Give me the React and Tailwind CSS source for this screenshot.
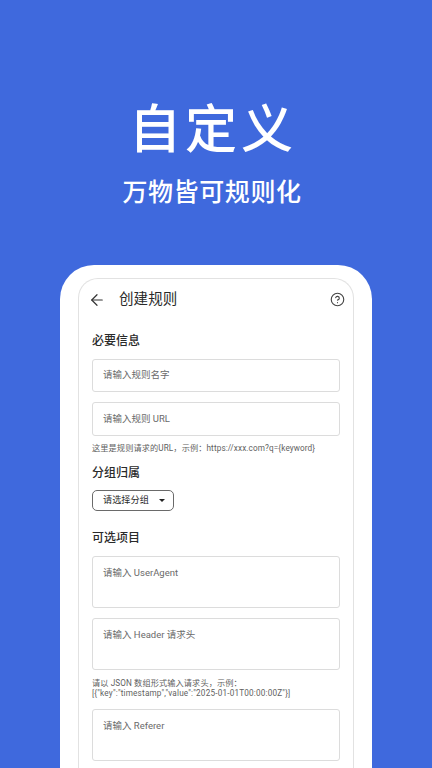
import { ArrowLeft, CircleHelp } from "lucide-react";

const FONT = "font-['Roboto','Noto_Sans_CJK_SC',sans-serif]";

const TextBox = ({ placeholder, className }) => (
  <div
    className={`rounded-[3px] border border-[#dcdcdc] bg-white pl-[10px] text-[9.5px] text-[#6a6a6a] ${className}`}
  >
    {placeholder}
  </div>
);

const SectionTitle = ({ children, className }) => (
  <h2 className={`text-[12px] leading-[18px] font-medium text-[#2a2a2a] ${className}`}>
    {children}
  </h2>
);

const Hint = ({ children, className }) => (
  <p className={`text-[8.2px] leading-[10.5px] tracking-[0.1px] text-[#5f5f5f] ${className}`}>{children}</p>
);

const App = () => {
  return (
    <div className={`flex h-[768px] w-[432px] flex-col items-center overflow-hidden bg-[#3f69dd] ${FONT}`}>
      <h1 className="mt-[94px] mr-[6px] text-[52px] leading-[74px] font-medium tracking-[4px] text-white">
        自定义
      </h1>
      <p className="mt-[7px] mr-[8px] text-[25px] leading-[36px] font-medium tracking-[0.6px] text-white">
        万物皆可规则化
      </p>

      <div className="mt-[54px] w-[312px] flex-1 rounded-t-[34px] bg-white px-[18px] pt-[13px]">
        <div className="h-full rounded-t-[20px] border border-b-0 border-[#e2e2e2] px-[13px]">
          <div className="flex h-[42px] items-center">
            <ArrowLeft className="-ml-[4px] h-[18px] w-[18px] text-[#333333]" strokeWidth={1.6} />
            <span className="ml-[13px] flex-1 text-[14.5px] tracking-[0.1px] text-[#2a2a2a]">创建规则</span>
            <CircleHelp className="mr-[-5px] -mt-[1px] h-[15px] w-[15px] text-[#444444]" strokeWidth={1.8} />
          </div>

          <SectionTitle className="mt-[11px]">必要信息</SectionTitle>
          <TextBox placeholder="请输入规则名字" className="mt-[9px] flex h-[33px] items-center" />
          <TextBox placeholder="请输入规则 URL" className="mt-[10px] flex h-[34px] items-center" />
          <Hint className="mt-[7px]">这里是规则请求的URL，示例：https://xxx.com?q={"{keyword}"}</Hint>

          <SectionTitle className="mt-[10px]">分组归属</SectionTitle>
          <div className="mt-[8px] flex h-[21px] w-[82px] items-center rounded-[5px] border border-[#6a6a6a] pl-[10px] text-[9.2px] text-[#2a2a2a]">
            请选择分组
            <span className="ml-[10px] h-0 w-0 border-x-[3px] border-t-[3px] border-x-transparent border-t-[#222222]" />
          </div>

          <SectionTitle className="mt-[18px]">可选项目</SectionTitle>
          <TextBox placeholder="请输入 UserAgent" className="mt-[9px] h-[52px] pt-[8px] leading-[15px]" />
          <TextBox placeholder="请输入 Header 请求头" className="mt-[10px] h-[52px] pt-[8px] leading-[15px]" />
          <Hint className="mt-[8px]">
            请以 JSON 数组形式输入请求头，示例：
            <br />
            <span className="tracking-[0.18px]">{'[{"key":"timestamp","value":"2025-01-01T00:00:00Z"}]'}</span>
          </Hint>
          <TextBox placeholder="请输入 Referer" className="mt-[10px] h-[52px] pt-[8px] leading-[15px]" />
        </div>
      </div>
    </div>
  );
};

export default App;
